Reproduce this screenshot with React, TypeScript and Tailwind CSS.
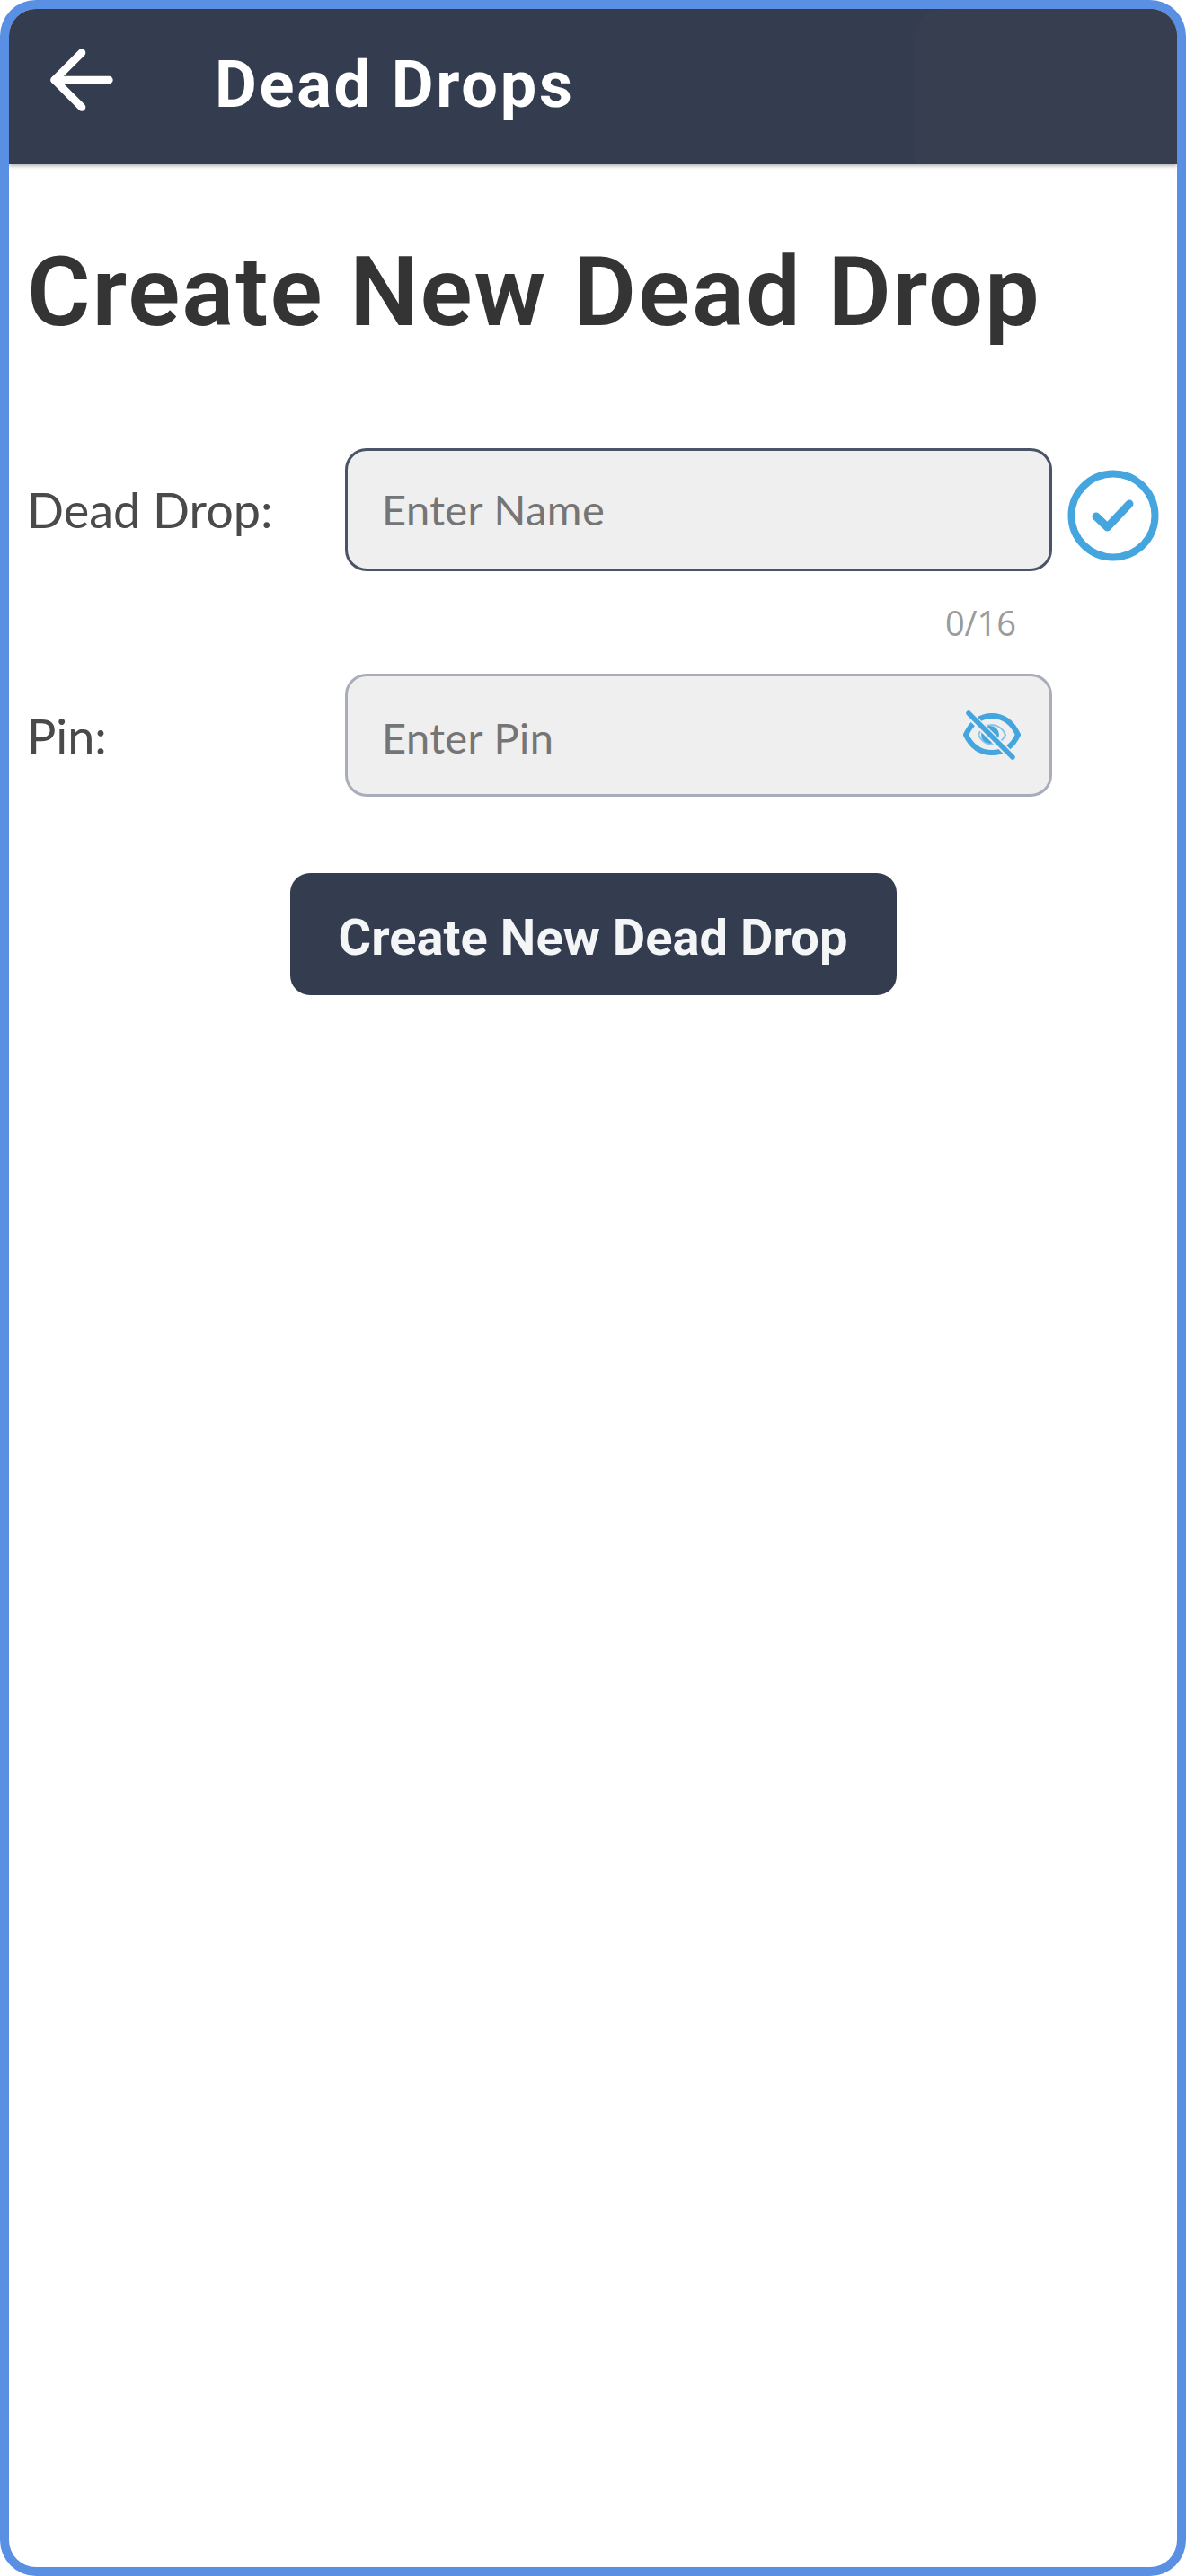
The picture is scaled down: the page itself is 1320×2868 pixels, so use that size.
import { ArrowLeft } from "lucide-react";

function EyeOff() {
  return (
    <svg width="64" height="56" viewBox="0 0 64 56" fill="none" stroke="#45a5df" strokeLinecap="round">
      <path d="M3 27C10 12 21 6 32 6s22 6 29 21C54 42 43 47 32 47S10 42 3 27Z" strokeWidth="6" />
      <path d="M17 27C20 20 26 16 32 16s12 4 15 11C44 34 38 38 32 38s-12-4-15-11Z" strokeWidth="2" strokeOpacity="0.6" />
      <circle cx="30" cy="27" r="10" fill="#45a5df" stroke="none" />
      <path d="M8 6 55 52" strokeWidth="9" stroke="#efefef" strokeLinecap="butt" />
      <path d="M6 3 55 52" strokeWidth="5.500" />
    </svg>
  );
}

function CheckCircle() {
  return (
    <svg width="102" height="102" viewBox="0 0 102 102" fill="none" stroke="#45a5df" strokeLinecap="round" strokeLinejoin="round">
      <circle cx="51" cy="51" r="46.500" strokeWidth="8" />
      <path d="M32 52 44.500 64 69 38" strokeWidth="9" />
    </svg>
  );
}

export default function App() {
  return (
    <div className="w-[1320px] h-[2868px] bg-[#5a90e4] p-[10px] rounded-[40px] overflow-hidden font-['Lato',sans-serif]">
      <div className="flex flex-col h-full bg-white rounded-[30px] overflow-hidden">
        {/* Header */}
        <header className="relative flex items-center h-[173px] shrink-0 bg-[#343d4f] shadow-[0_2px_4px_rgba(0,0,0,0.3)]">
          <div className="absolute right-0 top-0 bottom-0 w-[292px] bg-[#363e50] rounded-tl-[30px]" />
          <ArrowLeft className="ml-[29px] mb-[16px] text-white" size={104} strokeWidth={2} />
          <h1 className="ml-[96px] -mt-[4px] text-white text-[72px] leading-none font-bold tracking-[2.800px] font-['Roboto',sans-serif]">
            Dead Drops
          </h1>
        </header>

        {/* Title */}
        <h2 className="ml-[20px] mt-[82px] text-[#343434] text-[108px] leading-[120px] font-semibold tracking-[1.900px] font-['Roboto',sans-serif] whitespace-nowrap">
          Create New Dead Drop
        </h2>

        {/* Form */}
        <div className="mt-[114px] flex flex-col">
          <div className="flex items-center h-[137px]">
            <label className="w-[374px] pl-[20px] text-[#4a4a4a] text-[54px] leading-none">Dead Drop:</label>
            <div className="flex items-center w-[787px] h-[137px] pl-[38px] bg-[#efefef] border-[3px] border-[#4a5468] rounded-[24px] text-[#757575] text-[47px] tracking-[0.400px]">
              Enter Name
            </div>
            <div className="ml-[17px] mt-[13px]">
              <CheckCircle />
            </div>
          </div>
          <div className="mt-[34px] w-[1121px] text-right text-[#9b9b9b] text-[38px] leading-[46px] font-['Open_Sans',sans-serif]">
            0/16
          </div>
          <div className="mt-[34px] flex items-center">
            <label className="w-[374px] pl-[20px] mt-[3px] text-[#4a4a4a] text-[54px] leading-none">Pin:</label>
            <div className="flex items-center justify-between w-[787px] h-[137px] pl-[38px] pr-[32px] bg-[#efefef] border-[3px] border-[#a9adba] rounded-[24px] text-[#757575] text-[47px] tracking-[0.400px]">
              <span className="mt-[6px]">Enter Pin</span>
              <EyeOff />
            </div>
          </div>
        </div>

        {/* Action */}
        <div className="mt-[85px] flex justify-center">
          <button className="w-[675px] h-[136px] pt-[8px] bg-[#343d4f] rounded-[22px] text-[#f4f5f6] text-[56px] font-bold tracking-[0.050px] font-['Roboto',sans-serif]">
            Create New Dead Drop
          </button>
        </div>
      </div>
    </div>
  );
}
